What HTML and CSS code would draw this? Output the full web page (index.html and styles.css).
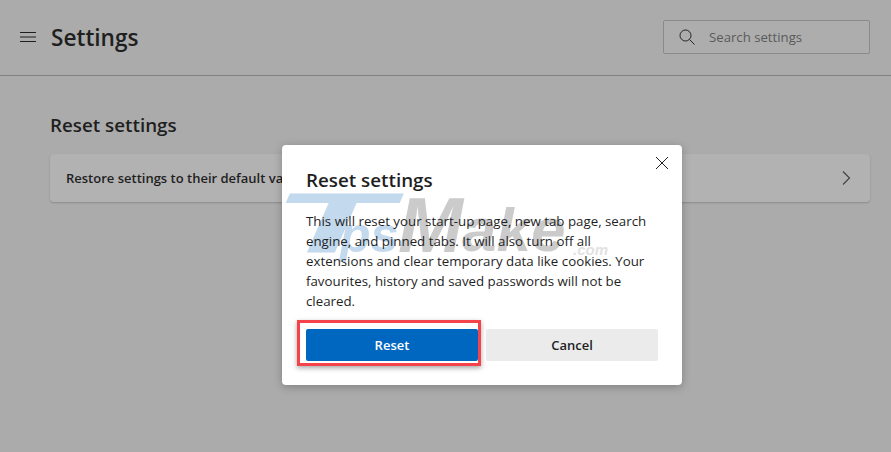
FILE: index.html
```html
<!DOCTYPE html>
<html lang="en">
<head>
<meta charset="utf-8">
<title>Settings</title>
<link rel="stylesheet" href="styles.css">
</head>
<body>
<div class="page">
  <header class="topbar">
    <div class="brand">
      <svg class="menu-icon" width="16" height="10" viewBox="0 0 16 10" aria-hidden="true"><path d="M0 .5h16M0 5h16M0 9.500h16" stroke="#1f1f1f" fill="none"/></svg>
      <h1 class="title">Settings</h1>
    </div>
    <div class="search">
      <svg class="search-icon" width="16" height="16" viewBox="0 0 16 16" aria-hidden="true"><circle cx="6.500" cy="6.500" r="5.500" stroke="#222" fill="none"/><path d="M10.500 10.500L15.500 15.500" stroke="#222" fill="none"/></svg>
      <span class="search-text">Search settings</span>
    </div>
  </header>
  <main class="content">
    <h2 class="section-title">Reset settings</h2>
    <div class="card">
      <span class="card-label">Restore settings to their default values</span>
      <svg width="9" height="14" viewBox="0 0 9 14" aria-hidden="true"><path d="M1 .5L7.500 7 1 13.500" stroke="#444" stroke-width="1.200" fill="none"/></svg>
    </div>
  </main>
  <section class="dialog">
    <div class="watermark"><span class="wm wm-t">T</span><span class="wm wm-ips">ips</span><span class="wm wm-m">M</span><span class="wm wm-ake">ake</span><span class="wm wm-com">.com</span></div>
    <svg class="close" width="12" height="12" viewBox="0 0 12 12" aria-hidden="true"><path d="M0 0L12 12M12 0L0 12" stroke="#222" fill="none"/></svg>
    <h2 class="dialog-title">Reset settings</h2>
    <p class="dialog-text">This will reset your start-up page, new tab page, search engine, and pinned tabs. It will also turn off all extensions and clear temporary data like cookies. Your favourites, history and saved passwords will not be cleared.</p>
    <div class="actions">
      <button class="btn btn-primary">Reset</button>
      <button class="btn btn-secondary">Cancel</button>
    </div>
    <div class="highlight"></div>
  </section>
</div>
</body>
</html>
```
FILE: styles.css
```css
* { box-sizing: border-box; }
html, body { margin: 0; height: 100%; }
body { font-family: "Open Sans", "Noto Sans", sans-serif; color: #1f1f1f; background: #ababab; overflow: hidden; }
.page { position: relative; width: 891px; height: 452px; background: #ababab; }
.topbar { height: 76px; border-bottom: 1px solid #808080; display: flex; justify-content: space-between; align-items: flex-start; padding: 20px 21px 0 20px; }
.brand { display: flex; align-items: center; height: 34px; }
.menu-icon { display: block; }
.title { margin: 2px 0 0 15px; font-size: 22.600px; font-weight: 600; line-height: 34px; }
.search { width: 207px; height: 34px; border: 1px solid #8a8a8a; border-radius: 2px; background: #adadad; display: flex; align-items: center; padding-left: 15px; }
.search-icon { display: block; }
.search-text { margin-left: 14px; font-size: 13.200px; color: #5a5a5a; }
.content { padding: 35px 21px 0 50px; }
.section-title { margin: 0; font-size: 18.800px; font-weight: 600; line-height: 28px; }
.card { margin-top: 15px; height: 48px; border-radius: 4px; background: #b2b2b2; box-shadow: 0 1px 2px rgba(0,0,0,.2); display: flex; justify-content: space-between; align-items: center; padding: 0 19px 0 16px; }
.card-label { font-size: 13px; font-weight: 600; }
.dialog { position: absolute; left: 282px; top: 145px; width: 400px; height: 240px; background: #fff; border-radius: 4px; box-shadow: 0 2px 8px rgba(0,0,0,.25); padding: 21px 24px 0; }
.close { position: absolute; right: 14px; top: 12px; }
.dialog-title { position: relative; margin: 0; font-size: 18.800px; font-weight: 600; line-height: 28px; }
.dialog-text { position: relative; margin: 17px 0 0; font-size: 13.300px; line-height: 20px; }
.actions { position: relative; display: flex; gap: 8px; margin-top: 18px; }
.btn { width: 172px; height: 32px; border: 0; border-radius: 2px; font-family: inherit; font-size: 13px; font-weight: 600; padding: 0; }
.btn-primary { background: #0067c0; color: #fff; }
.btn-secondary { background: #ebebeb; color: #1f1f1f; }
.highlight { position: absolute; left: 15px; top: 175px; width: 184px; height: 46px; border: 3px solid #f4434a; box-shadow: 0 2px 5px rgba(0,0,0,.35); }
.watermark { position: absolute; inset: 0; font-family: "Liberation Sans", sans-serif; font-weight: 700; font-style: italic; white-space: nowrap; line-height: 1; }
.wm { position: absolute; }
.wm-t { left: -10px; top: 34px; color: #c3d9ee; font-size: 86px; transform: scaleX(2.250); transform-origin: left top; }
.wm-ips { left: 44px; top: 65px; color: #c3d9ee; font-size: 50px; }
.wm-m { left: 116px; top: 41px; color: #cbcbcb; font-size: 78px; }
.wm-ake { left: 180px; top: 54px; color: #cbcbcb; font-size: 62px; }
.wm-com { left: 291px; top: 97px; color: #e2e2e2; font-size: 15px; }
```
